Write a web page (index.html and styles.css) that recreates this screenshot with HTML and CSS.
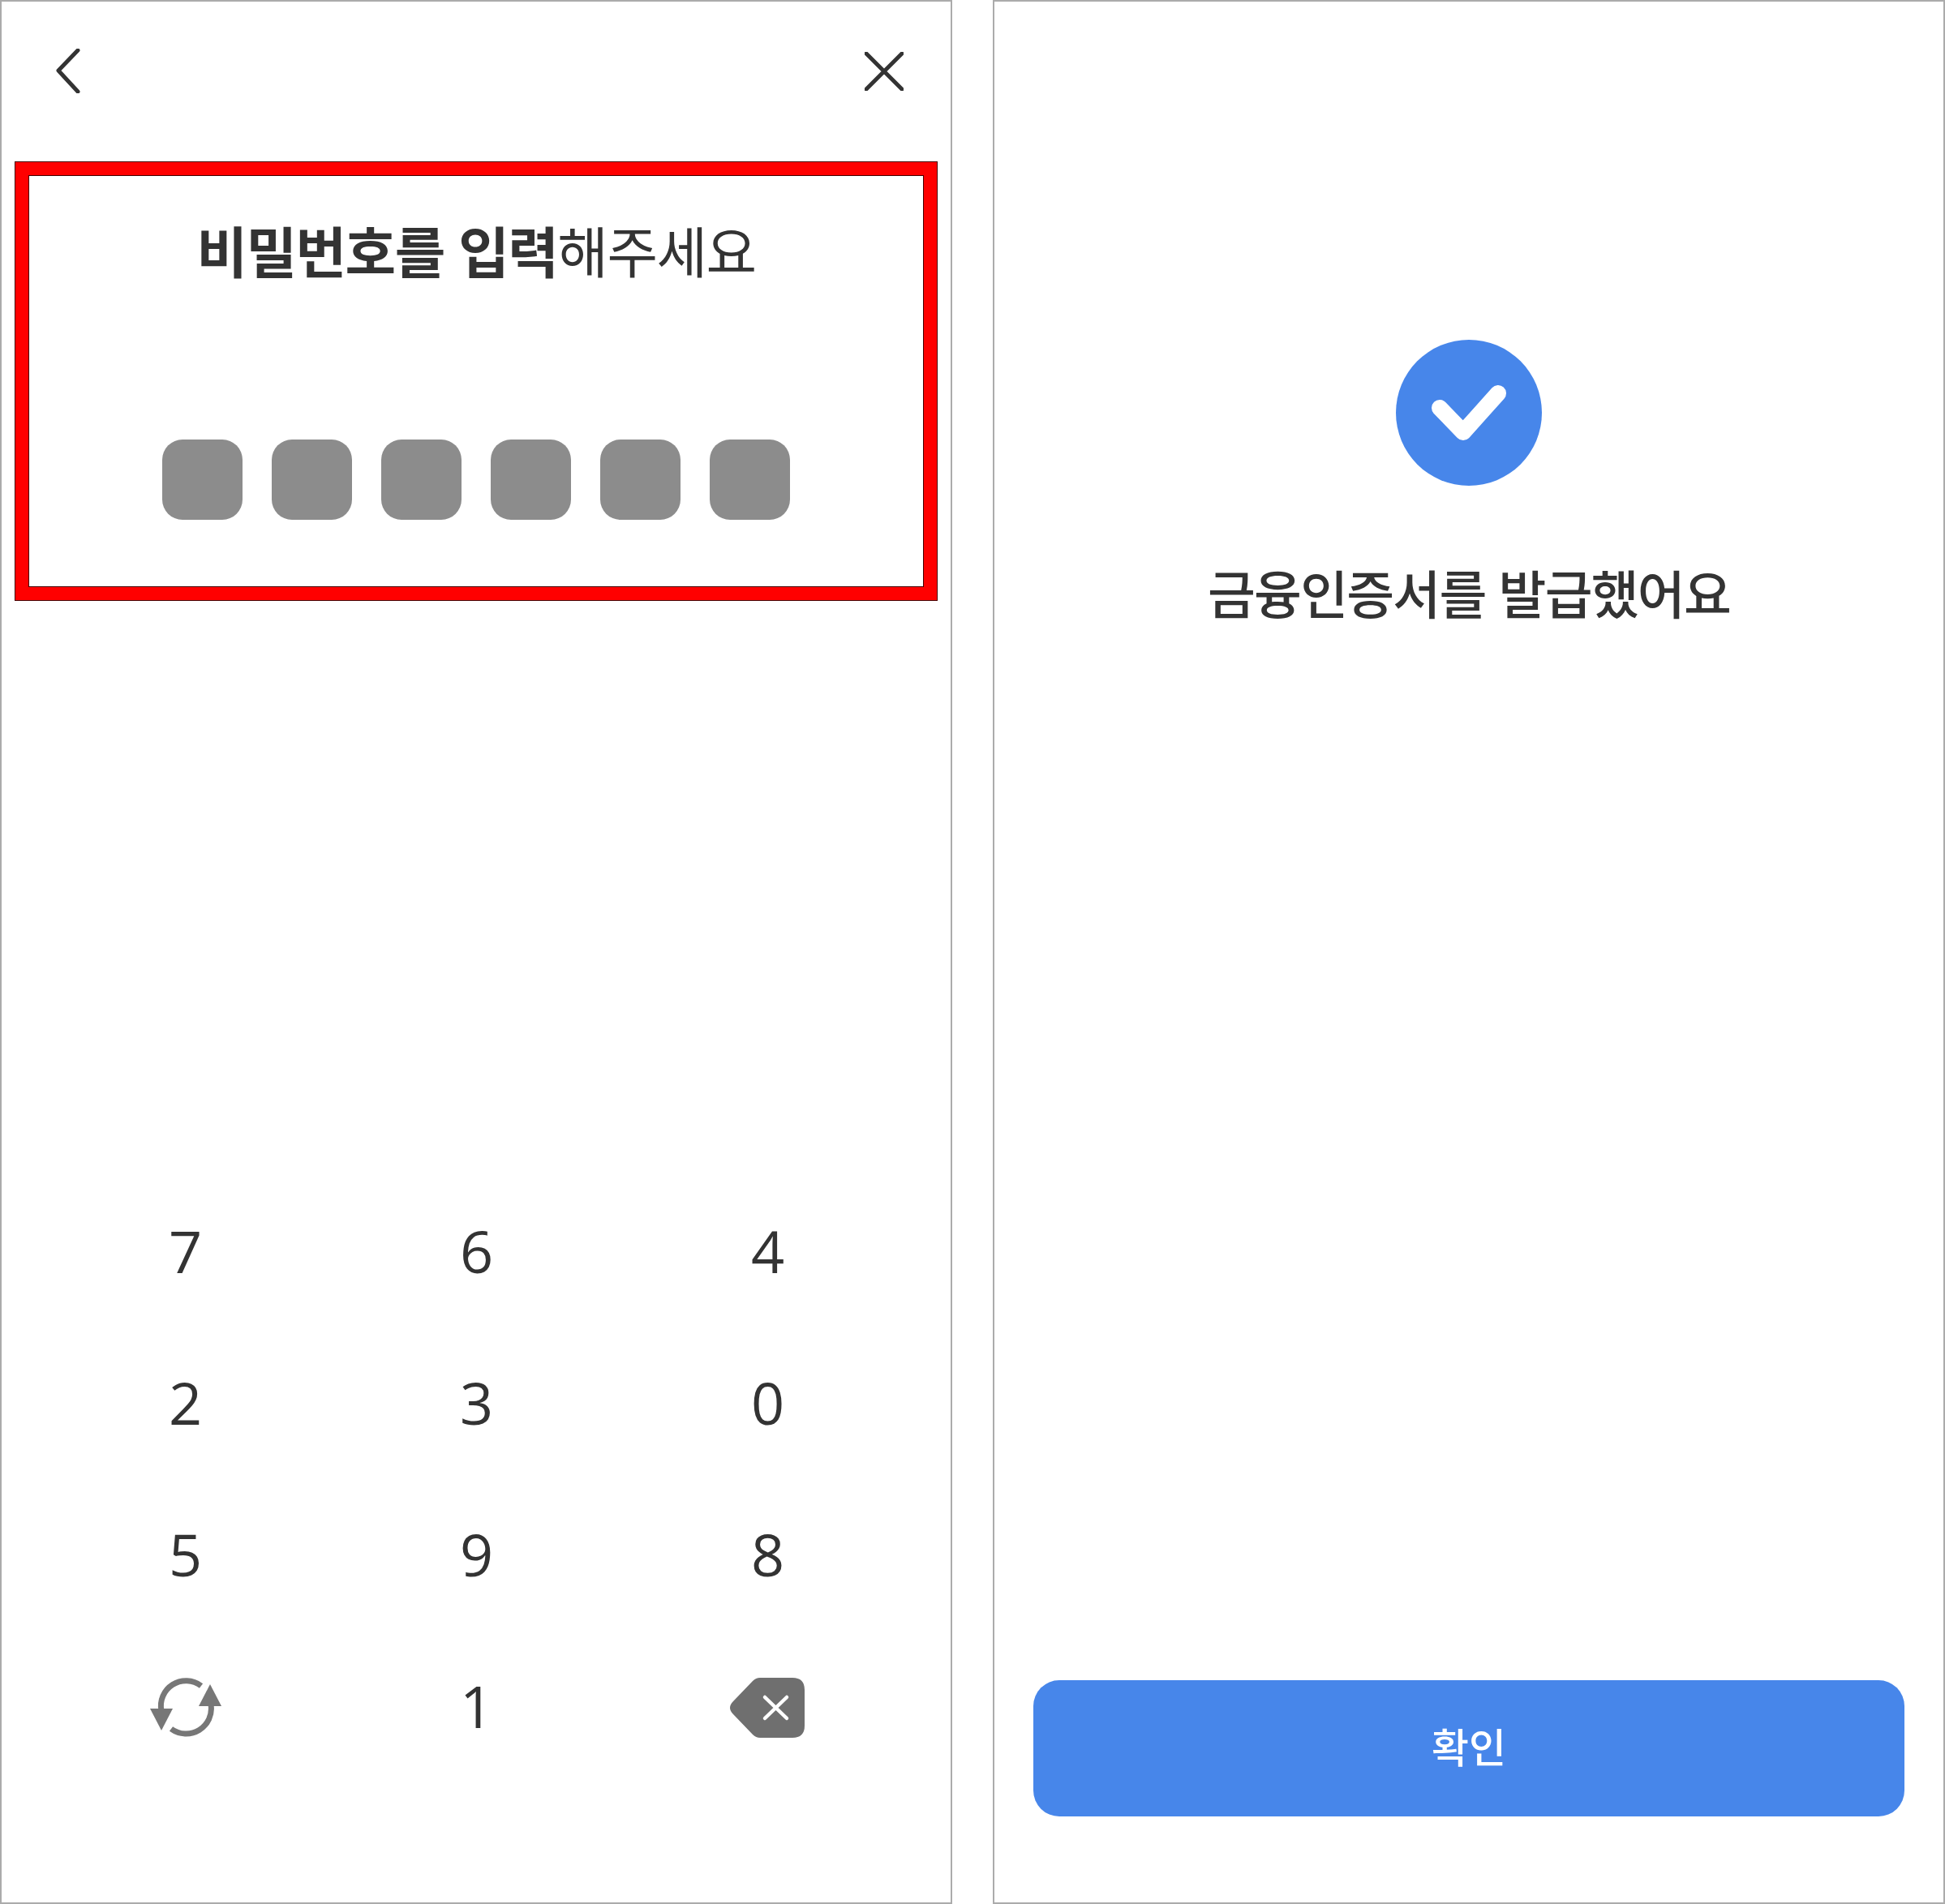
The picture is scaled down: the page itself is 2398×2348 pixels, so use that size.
FILE: index.html
```html
<!DOCTYPE html>
<html lang="ko">
<head>
<meta charset="utf-8">
<title>금융인증서 발급</title>
<link rel="stylesheet" href="styles.css">
</head>
<body>
<main class="screens">
  <section class="panel panel-pin">
    <header class="topbar">
      <svg class="icon-back" viewBox="0 0 30 55"><path d="M27 2 3 27l24 26"/></svg>
      <svg class="icon-close" viewBox="0 0 48 48"><path d="M2 2l44 44M46 2 2 46"/></svg>
    </header>
    <div class="highlight">
      <h1 class="pin-title"><b>비밀번호를 입력</b>해주세요</h1>
      <div class="pin-dots">
        <span class="dot"></span><span class="dot"></span><span class="dot"></span>
        <span class="dot"></span><span class="dot"></span><span class="dot"></span>
      </div>
    </div>
    <div class="keypad">
      <span class="key">7</span><span class="key">6</span><span class="key">4</span>
      <span class="key">2</span><span class="key">3</span><span class="key">0</span>
      <span class="key">5</span><span class="key">9</span><span class="key">8</span>
      <span class="key key-icon key-refresh">
        <svg class="icon-refresh" viewBox="0 0 94 76" aria-label="재배열">
          <path class="arc" d="M20 42A31 31 0 0 1 69 11"/>
          <path class="arc" d="M81 34A31 31 0 0 1 32 64"/>
          <path class="head" d="M6 39H34L20 66Z"/>
          <path class="head" d="M66 36H94L80 9Z"/>
        </svg>
      </span>
      <span class="key">1</span>
      <span class="key key-icon">
        <svg class="icon-del" viewBox="0 0 94 75" aria-label="지우기">
          <path class="del-body" d="M38 1H78Q93 1 93 16V60Q93 75 78 75H38Q33 75 29 71L5 46Q-3 38 5 30L29 5Q33 1 38 1Z"/>
          <path class="del-x" d="M44 25 71 51M71 25 44 51"/>
        </svg>
      </span>
    </div>
  </section>
  <section class="panel panel-done">
    <svg class="icon-check" viewBox="0 0 180 180">
      <circle cx="90" cy="90" r="90"/>
      <path d="M54 84 83 114 126 66"/>
    </svg>
    <h2 class="done-title">금융인증서를 발급했어요</h2>
    <button class="confirm" type="button">확인</button>
  </section>
</main>
</body>
</html>
```

FILE: styles.css
```css
* { box-sizing: border-box; }
html, body { margin: 0; background: #fff; }
body {
  width: 2398px;
  height: 2348px;
  overflow: hidden;
  font-family: "Noto Sans CJK KR", "Noto Sans", sans-serif;
  color: #333;
}
.screens {
  display: flex;
  justify-content: space-between;
  height: 2348px;
}
.panel {
  width: 1174px;
  height: 2348px;
  border: 2px solid #ababab;
  background: #fff;
  display: flex;
  flex-direction: column;
}
.panel-pin { padding: 0 14px; }
.topbar {
  display: flex;
  justify-content: space-between;
  align-items: flex-start;
  height: 197px;
  padding: 0 44px 0 53px;
}
.icon-back {
  width: 30px;
  height: 55px;
  margin-top: 58px;
  fill: none;
  stroke: #333;
  stroke-width: 5;
  stroke-linecap: round;
  stroke-linejoin: round;
}
.icon-close {
  width: 48px;
  height: 48px;
  margin-top: 62px;
  fill: none;
  stroke: #333;
  stroke-width: 5;
  stroke-linecap: round;
}
.highlight {
  margin: 0 2px;
  height: 542px;
  border: 17px solid #f00;
  outline: 1px solid #400;
  outline-offset: -1px;
  box-shadow: inset 0 0 0 1px #400;
  display: flex;
  flex-direction: column;
  align-items: center;
}
.pin-title {
  margin: 44px 0 0;
  font-size: 68px;
  letter-spacing: -1.5px;
  line-height: 96px;
  font-weight: 400;
  white-space: nowrap;
  color: #333;
}
.pin-title b { font-weight: 700; }
.pin-dots {
  display: flex;
  gap: 36px;
  margin-top: 186px;
}
.dot {
  width: 99px;
  height: 99px;
  border-radius: 25px;
  background: #8c8c8c;
}
.keypad {
  display: grid;
  grid-template-columns: repeat(3, 359px);
  grid-auto-rows: 187px;
  margin: 710px 0 0 33px;
  font-family: "Open Sans", sans-serif;
  font-size: 72px;
  font-weight: 400;
  color: #333;
}
.key {
  display: flex;
  align-items: center;
  justify-content: center;
  padding-bottom: 6px;
}
.key-icon { padding: 0 2px 0 0; }
.key-refresh { padding-right: 5px; }
.icon-refresh { width: 94px; height: 76px; }
.icon-refresh .arc { fill: none; stroke: #777; stroke-width: 7; }
.icon-refresh .head { fill: #777; }
.icon-del { width: 94px; height: 75px; }
.del-body { fill: #6f6f6f; }
.del-x { fill: none; stroke: #fff; stroke-width: 4.5; stroke-linecap: round; }
.panel-done {
  align-items: center;
  padding: 0 48px;
}
.icon-check {
  width: 180px;
  height: 180px;
  margin-top: 417px;
  flex: none;
}
.icon-check circle { fill: #4786ea; }
.icon-check path {
  fill: none;
  stroke: #fff;
  stroke-width: 20;
  stroke-linecap: round;
  stroke-linejoin: round;
}
.done-title {
  margin: 85px 0 0;
  font-size: 64px;
  letter-spacing: -1.8px;
  line-height: 90px;
  font-weight: 500;
  white-space: nowrap;
  color: #333;
}
.confirm {
  width: 1074px;
  height: 168px;
  margin-top: auto;
  margin-bottom: 106px;
  padding-bottom: 10px;
  border: 0;
  border-radius: 32px;
  background: #4786ea;
  color: #fff;
  font: 500 50px "Noto Sans CJK KR", sans-serif;
}
```
